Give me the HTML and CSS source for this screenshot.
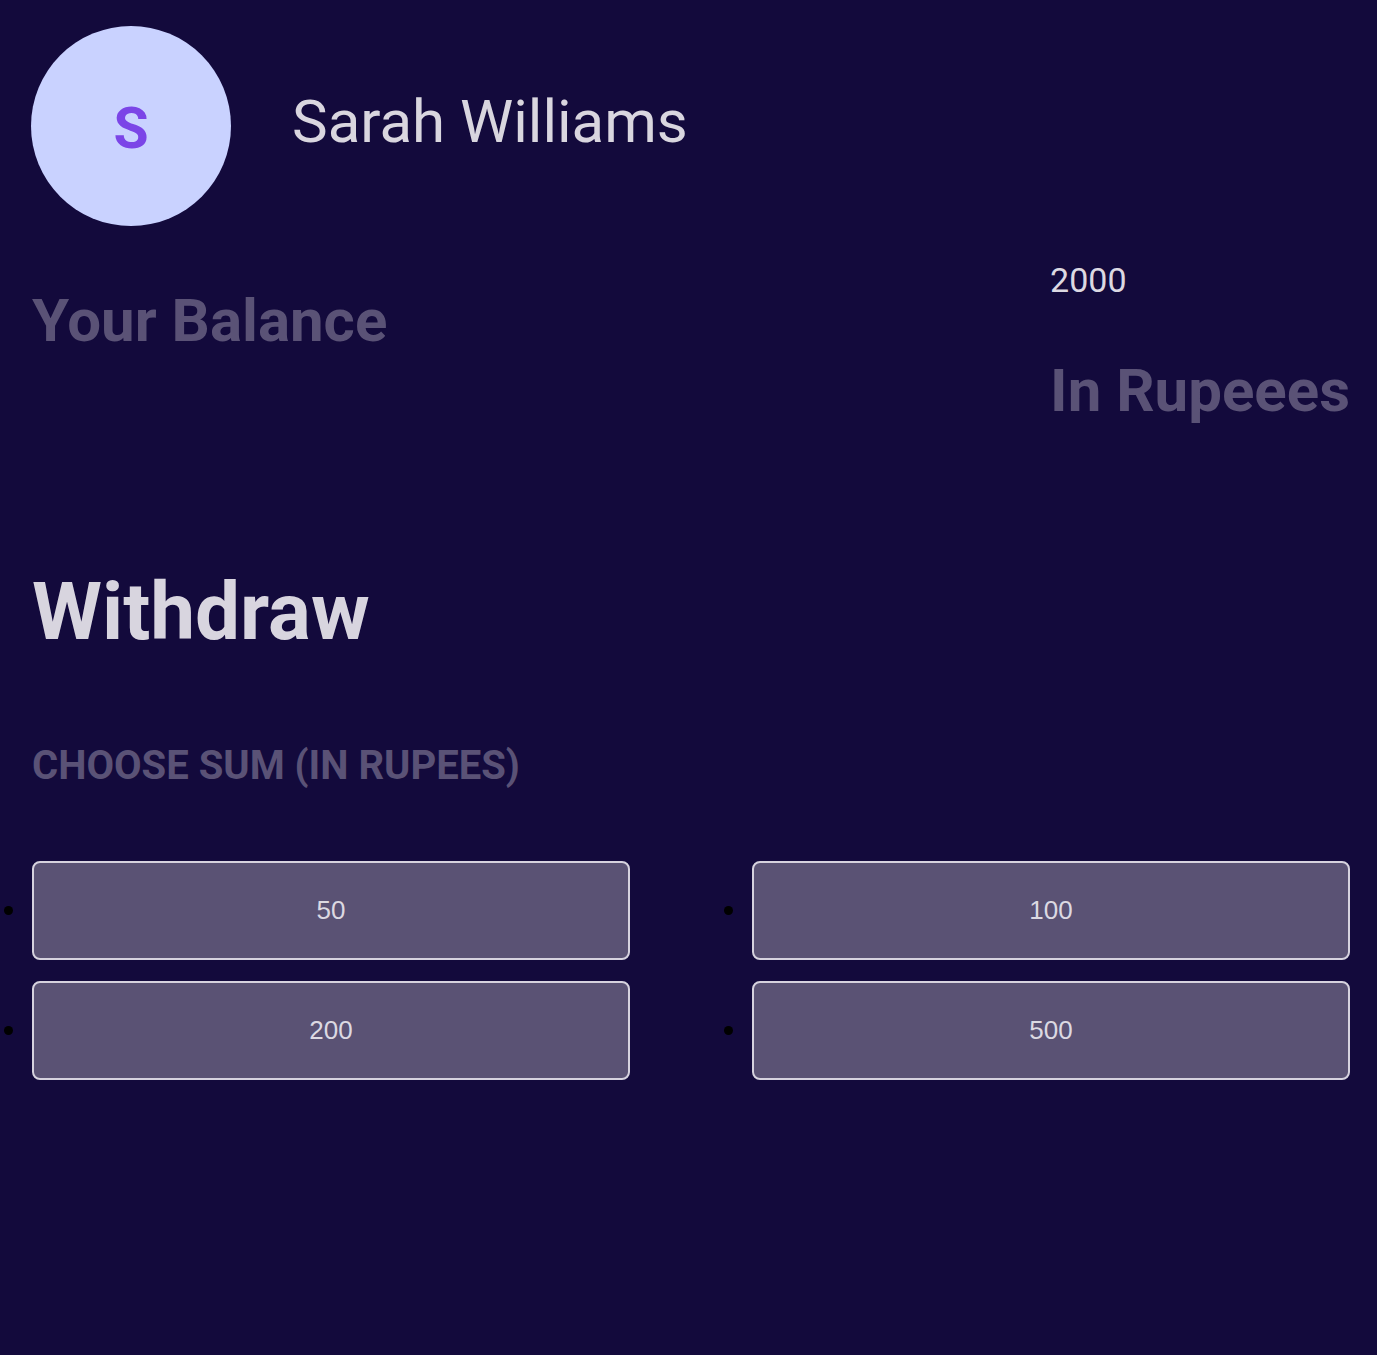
FILE: index.html
```html
<!DOCTYPE html>
<html lang="en">
<head>
<meta charset="utf-8">
<title>Withdraw</title>
<link rel="stylesheet" href="styles.css">
</head>
<body>
<main class="page">
  <header class="profile">
    <div class="avatar">S</div>
    <h1 class="name">Sarah Williams</h1>
  </header>

  <section class="balance">
    <h2 class="balance-title">Your Balance</h2>
    <div class="balance-value">
      <p class="amount">2000</p>
      <h2 class="currency">In Rupeees</h2>
    </div>
  </section>

  <section class="withdraw">
    <h2 class="withdraw-title">Withdraw</h2>
    <h3 class="choose">CHOOSE SUM (IN RUPEES)</h3>
    <ul class="sums">
      <li class="sum-item"><button class="sum">50</button></li>
      <li class="sum-item"><button class="sum">100</button></li>
      <li class="sum-item"><button class="sum">200</button></li>
      <li class="sum-item"><button class="sum">500</button></li>
    </ul>
  </section>
</main>
</body>
</html>
```

FILE: styles.css
```css
html, body {
  margin: 0;
  padding: 0;
  background: #130a3c;
}

body {
  font-family: Roboto, "Liberation Sans", Arial, sans-serif;
  min-height: 1355px;
}

.page {
  padding: 26px 27px 0 31px;
}

.profile {
  display: flex;
  align-items: center;
  gap: 61px;
}

.avatar {
  width: 200px;
  height: 200px;
  box-sizing: border-box;
  padding-top: 5px;
  border-radius: 50%;
  background: #c9d2ff;
  color: #7b45e7;
  font-size: 57px;
  font-weight: 700;
  display: flex;
  align-items: center;
  justify-content: center;
  flex-shrink: 0;
}

.name {
  margin: 0 0 10px 0;
  font-size: 60px;
  font-weight: 400;
  color: #d9d6df;
  line-height: normal;
}

.balance {
  display: flex;
  justify-content: space-between;
  align-items: flex-start;
  margin-top: 34px;
  padding-left: 1px;
}

.balance-title {
  margin: 25px 0 0 0;
  font-size: 60px;
  font-weight: 700;
  color: #5a5276;
  line-height: normal;
}

.balance-value {
  display: flex;
  flex-direction: column;
}

.amount {
  margin: 0;
  font-size: 34px;
  font-weight: 400;
  color: #dcd9e2;
  line-height: normal;
}

.currency {
  margin: 55px 0 0 0;
  font-size: 60px;
  font-weight: 700;
  color: #5a5276;
  line-height: normal;
}

.withdraw {
  padding-left: 1px;
}

.withdraw-title {
  margin: 139px 0 0 0;
  font-size: 80px;
  font-weight: 700;
  color: #d8d5df;
  line-height: normal;
}

.choose {
  margin: 83px 0 0 0;
  font-size: 40px;
  font-weight: 700;
  color: #5a5276;
  line-height: normal;
}

.sums {
  display: grid;
  grid-template-columns: 1fr 1fr;
  column-gap: 122px;
  row-gap: 21px;
  margin: 72px 0 0 0;
  padding: 0;
  list-style: none;
}

.sum-item {
  position: relative;
  display: flex;
}

.sum-item::before {
  content: "";
  position: absolute;
  left: -28px;
  top: 50%;
  width: 9px;
  height: 9px;
  margin-top: -5px;
  border-radius: 50%;
  background: #000;
}

.sum {
  width: 100%;
  height: 99px;
  background: #5a5274;
  border: 2px solid #d6d2de;
  border-radius: 8px;
  color: #dcd9e2;
  font-family: "Liberation Sans", Arial, sans-serif;
  font-size: 26px;
  cursor: pointer;
}
```
